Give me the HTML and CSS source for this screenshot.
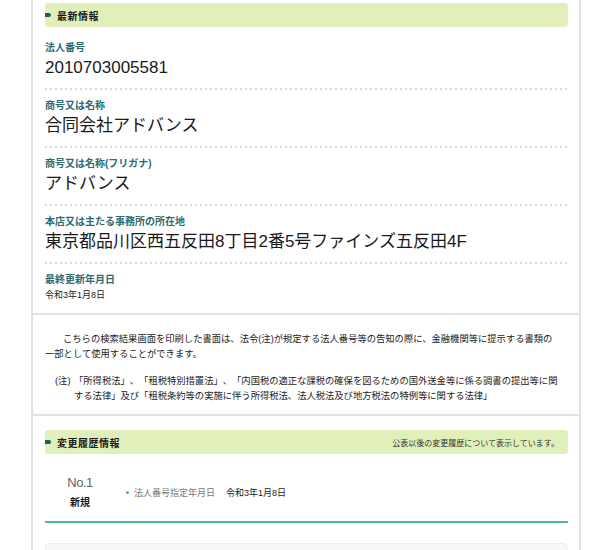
FILE: index.html
```html
<!DOCTYPE html>
<html>
<head>
    <title>法人番号 検索結果</title>
    <link rel="stylesheet" href="styles.css">
</head>
<body>
    <div class="page">
        <section class="block">
            <h2 class="bar"><span class="bar-title">最新情報</span></h2>
            <dl class="fields">
                <div class="field">
                    <dt>法人番号</dt>
                    <dd>2010703005581</dd>
                </div>
                <div class="field">
                    <dt>商号又は名称</dt>
                    <dd>合同会社アドバンス</dd>
                </div>
                <div class="field">
                    <dt>商号又は名称(フリガナ)</dt>
                    <dd>アドバンス</dd>
                </div>
                <div class="field">
                    <dt>本店又は主たる事務所の所在地</dt>
                    <dd>東京都品川区西五反田8丁目2番5号ファインズ五反田4F</dd>
                </div>
                <div class="field last">
                    <dt>最終更新年月日</dt>
                    <dd class="small">令和3年1月8日</dd>
                </div>
            </dl>
        </section>

        <section class="notice">
            <p class="lead">こちらの検索結果画面を印刷した書面は、法令(注)が規定する法人番号等の告知の際に、金融機関等に提示する書類の一部として使用することができます。</p>
            <div class="note">
                <span class="note-mark">(注)</span>
                <p>「所得税法」、「租税特別措置法」、「内国税の適正な課税の確保を図るための国外送金等に係る調書の提出等に関する法律」及び「租税条約等の実施に伴う所得税法、法人税法及び地方税法の特例等に関する法律」</p>
            </div>
        </section>

        <section class="block history-block">
            <h2 class="bar">
                <span class="bar-title">変更履歴情報</span>
                <span class="bar-note">公表以後の変更履歴について表示しています。</span>
            </h2>
            <div class="history">
                <div class="history-no">
                    <span class="no">No.1</span>
                    <span class="kind">新規</span>
                </div>
                <ul class="history-items">
                    <li><span class="item-name">法人番号指定年月日</span><span class="item-value">令和3年1月8日</span></li>
                </ul>
            </div>
            <div class="next-box"></div>
        </section>
    </div>
</body>
</html>
```

FILE: styles.css
```css
body {
    margin: 0;
    background-color: #fff;
    color: #1a1a1a;
    font-family: "Liberation Sans", "Noto Sans CJK JP", sans-serif;
}
.page {
    width: 546px;
    min-height: 100vh;
    margin-left: 31px;
    border-left: 2px solid #e2e2e2;
    border-right: 2px solid #e2e2e2;
}
.block {
    padding: 3px 11px 0 12px;
}

/* green section header */
.bar {
    display: flex;
    align-items: center;
    justify-content: space-between;
    height: 24px;
    margin: 0;
    padding-right: 9px;
    background-color: #e1f0bb;
    border-radius: 3px;
    font-size: 10px;
    font-weight: bold;
}
.bar-title {
    display: flex;
    align-items: center;
    gap: 6px;
    letter-spacing: 0.5px;
}
.bar-title::before {
    content: "";
    width: 6px;
    height: 4px;
    background-color: #17645f;
    border-radius: 0 2px 2px 0;
}
.bar-note {
    font-size: 8px;
    font-weight: normal;
    color: #333;
}

/* latest info */
.fields {
    margin: 15px 0 0;
}
.field {
    padding: 10px 0;
    background: linear-gradient(to right, #d9d9d9 2px, transparent 2px) left bottom / 5px 2px repeat-x;
}
.field:first-child {
    padding-top: 0;
}
.field dt {
    font-size: 10px;
    line-height: 12px;
    font-weight: bold;
    color: #2d6b70;
}
.field dd {
    margin: 2px 0 0;
    font-size: 17px;
    line-height: 24px;
}
.field.last {
    padding-bottom: 11px;
    background: none;
}
.field dd.small {
    font-size: 9px;
    line-height: 14px;
}

/* notice */
.notice {
    padding: 17px 18px 10px 12px;
    border-top: 2px solid #e3e3e3;
    border-bottom: 2px solid #e3e3e3;
    font-size: 9.3px;
    line-height: 15px;
    text-spacing-trim: space-all;
}
.lead {
    margin: 0;
    text-indent: 18px;
}
.note {
    display: flex;
    margin-top: 12px;
}
.note-mark {
    flex: none;
    width: 19px;
    padding-left: 10px;
}
.note p {
    margin: 0;
}

/* change history */
.history-block {
    padding-top: 14px;
}
.history {
    display: flex;
    align-items: center;
    padding: 20px 0 11px;
    border-bottom: 2px solid #4dbf8a;
}
.history-no {
    display: flex;
    flex-direction: column;
    align-items: center;
    width: 70px;
}
.no {
    font-size: 13px;
    line-height: 18px;
    color: #666;
    letter-spacing: -0.5px;
}
.kind {
    margin-top: 4px;
    font-size: 10px;
    line-height: 14px;
    font-weight: bold;
}
.history-items {
    list-style: none;
    margin: 0;
    padding: 0 0 0 11px;
    font-size: 9px;
}
.history-items li {
    display: flex;
    align-items: center;
}
.history-items li::before {
    content: "";
    width: 3px;
    height: 3px;
    margin-right: 5px;
    background-color: #3dbb83;
    border-radius: 50%;
}
.item-name {
    color: #777;
}
.item-value {
    margin-left: 11px;
}
.next-box {
    height: 30px;
    margin-top: 20px;
    background-color: #f7f7f7;
    border: 1px solid #eee;
    border-radius: 5px;
}
```
